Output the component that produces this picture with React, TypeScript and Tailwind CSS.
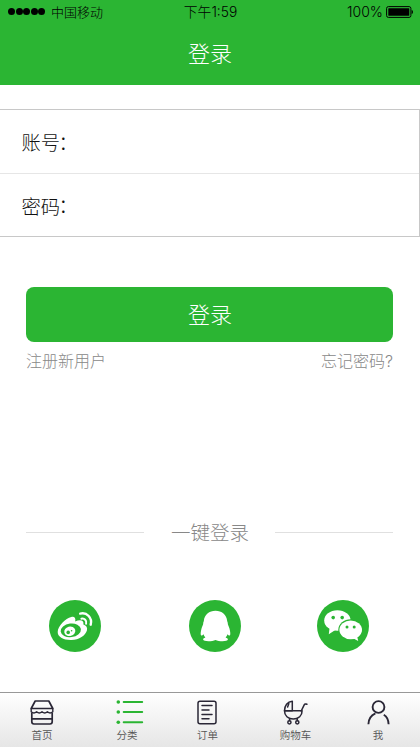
import React from "react";

const HomeIcon = () => (
  <svg width="24" height="25" viewBox="0 0 24 25" fill="none" stroke="#2a2736" strokeWidth="1.7" strokeLinejoin="round">
    <path d="M5.2 1h13.6l4 7.5H1.2z" />
    <path d="M1.2 8.5v3.2q2.7 2.4 5.4 0 2.7 2.4 5.4 0 2.7 2.4 5.4 0 2.7 2.4 5.4 0V8.5" strokeWidth="1.4" />
    <path d="M1.8 12.5v9.3q0 2.2 2.2 2.2h16q2.2 0 2.2-2.2v-9.3M2 18.8h20" />
  </svg>
);

const ListIcon = () => (
  <svg width="28" height="25" viewBox="0 0 28 25" fill="none" stroke="#2bb533" strokeWidth="2" strokeLinecap="round">
    <path d="M7.7 2h18.5M7.7 12h18.5M7.7 22.3h18.5" />
    <g fill="#2bb533" stroke="none">
      <circle cx="2.3" cy="2" r="1.8" />
      <circle cx="2.3" cy="12" r="1.8" />
      <circle cx="2.3" cy="22.3" r="1.8" />
    </g>
  </svg>
);

const OrderIcon = () => (
  <svg width="20" height="25" viewBox="0 0 20 25" fill="none" stroke="#2a2736" strokeWidth="1.5" strokeLinecap="round">
    <rect x="1" y="1.2" width="18" height="22.5" rx="2" />
    <path d="M5 5.6h10M5 10h7M5 14.4h10M5 18.8h7" />
  </svg>
);

const CartIcon = () => (
  <svg width="25" height="25" viewBox="0 0 25 25" fill="none" stroke="#2a2736" strokeWidth="1.5" strokeLinecap="round" strokeLinejoin="round">
    <path d="M9.3 1.2v9.6H1.5C1.5 5.8 4.4 1.7 9.3 1.2zM5.9 3.6L4.6 7" />
    <path d="M1.5 10.8h17.6c.1 4.8-3.6 8.2-8.8 8.2s-8.9-3.4-8.8-8.2z" />
    <path d="M18.2 11l3-6.2q.6-1.2 1.8-.8l.9.3M6.8 18.5l-.4 2M14 18.5l.4 2" />
    <circle cx="6.4" cy="22.3" r="1.6" />
    <circle cx="14.3" cy="22.3" r="1.6" />
  </svg>
);

const UserIcon = () => (
  <svg width="23" height="25" viewBox="0 0 23 25" fill="none" stroke="#2a2736" strokeWidth="1.9">
    <circle cx="11.5" cy="7" r="5.9" />
    <path d="M1.4 24.3c.1-4.9 2.6-8.9 7-10.9M16.8 14.8c3 1.8 4.7 5.2 4.8 9.5" />
  </svg>
);

const WeiboLogo = () => (
  <svg width="52" height="52" viewBox="0 0 52 52">
    <circle cx="26" cy="26" r="26" fill="#2bb533" />
    <path d="M22.3 17c3-.8 4.7 1 3.9 4.4 4.7-1.9 9-1.5 8.2 3 3 1 4.3 3.2 3.5 6-1.4 5-7.7 9.3-15.5 9.5-8 .2-13.9-3.2-13.7-8 .2-6 7.8-13.5 13.6-14.9z" fill="#fff" />
    <ellipse cx="21.8" cy="30.3" rx="10.2" ry="6.8" transform="rotate(-7 21.8 30.3)" fill="#2bb533" />
    <ellipse cx="20.8" cy="31.2" rx="5.6" ry="4.7" transform="rotate(-15 20.8 31.2)" fill="#fff" />
    <circle cx="19.2" cy="32.4" r="1.8" fill="#2bb533" />
    <circle cx="22.6" cy="30.8" r=".8" fill="#2bb533" />
    <path d="M31.2 13.6c6.7-1.8 12.4 4.6 10.5 11.1" fill="none" stroke="#fff" strokeWidth="2.4" strokeLinecap="round" />
    <path d="M32.4 18.7c3-.8 5.6 1.9 4.7 5" fill="none" stroke="#fff" strokeWidth="2" strokeLinecap="round" />
  </svg>
);

const QQLogo = () => (
  <svg width="52" height="52" viewBox="0 0 52 52">
    <circle cx="26" cy="26" r="26" fill="#2bb533" />
    <path d="M26.5 10.7c-6.3 0-11.2 4.1-11.6 9.9-.1 1.1-.7 1.8-.7 2.8 0 1.1-.9 2.4-1.6 4.8-.8 3-1.3 5.9-.6 7.1.6.8 1.6-.1 2.5-1 .3 1.3 1 2.4 1.9 3.3-1.4.5-2.4 1.1-2.3 2 .2 2.2 8.9 2.2 12.4.4 3.5 1.8 12.2 1.8 12.4-.4.1-.9-.9-1.5-2.3-2 .9-.9 1.6-2 1.9-3.3.9.9 1.9 1.8 2.5 1 .7-1.2.2-4.1-.6-7.1-.7-2.4-1.6-3.7-1.6-4.8 0-1-.6-1.7-.7-2.8-.4-5.8-5.3-9.9-11.6-9.9z" fill="#fff" />
  </svg>
);

const WechatLogo = () => (
  <svg width="52" height="52" viewBox="0 0 52 52">
    <circle cx="26" cy="26" r="26" fill="#2bb533" />
    <ellipse cx="20.4" cy="20.5" rx="13.2" ry="10.2" fill="#fff" />
    <path d="M12.6 27.5l-.8 6.8 6.5-4.2z" fill="#fff" />
    <ellipse cx="33.7" cy="29.8" rx="12.4" ry="10.6" fill="#2bb533" />
    <ellipse cx="33.7" cy="29.8" rx="11.3" ry="9.4" fill="#fff" />
    <path d="M36 38.2l5.2 2.7-1.1-5z" fill="#fff" />
    <g fill="#2bb533">
      <circle cx="16.2" cy="17.6" r="1.8" />
      <circle cx="25.2" cy="17.6" r="1.8" />
      <circle cx="30" cy="27" r="1.5" />
      <circle cx="37.2" cy="27" r="1.5" />
    </g>
  </svg>
);

const tabs = [
  { label: "首页", icon: <HomeIcon /> },
  { label: "分类", icon: <ListIcon />, shift: "ml-[5px]" },
  { label: "订单", icon: <OrderIcon />, shift: "-ml-px" },
  { label: "购物车", icon: <CartIcon />, shift: "-ml-px" },
  { label: "我", icon: <UserIcon /> },
];

const Field = ({ label }: { label: string }) => (
  <label className="flex h-[62.5px] items-center pl-[21.5px] pt-[2px] text-[19.3px] leading-7 text-[#111]">
    {label}
    <span className="-ml-[1.5px] -mt-px">：</span>
  </label>
);

export function App() {
  return (
    <div className="flex h-[747px] w-[420px] flex-col overflow-hidden bg-white font-['Noto_Sans_CJK_SC',sans-serif] font-light">
      <header className="h-[85px] shrink-0 bg-[#2bb533]">
        <div className="grid h-[23px] grid-cols-3 items-center pl-2 pr-[7px] text-[13px] leading-none text-black">
          <div className="flex items-center gap-[6px]">
            <div className="flex gap-[0.5px]">
              {[0, 1, 2, 3, 4].map((i) => (
                <span key={i} className="size-[7px] rounded-full bg-black" />
              ))}
            </div>
            <span className="-mt-px">中国移动</span>
          </div>
          <div className="pt-[2px] text-center font-['Inter','Noto_Sans_CJK_SC',sans-serif] text-[13.8px]">下午1:59</div>
          <div className="flex items-center justify-end gap-[3px] font-['Inter',sans-serif] text-[14px]">
            <span>100%</span>
            <svg width="27" height="12" viewBox="0 0 27 12">
              <rect x=".6" y=".6" width="24.3" height="10.8" rx="1.8" fill="none" stroke="#000" />
              <rect x="2.3" y="2.2" width="21" height="7.6" rx=".5" />
              <path d="M25.6 4q1.4 0 1.4 2t-1.4 2z" />
            </svg>
          </div>
        </div>
        <h1 className="flex h-[58px] items-center justify-center text-[22px] text-white">登录</h1>
      </header>

      <main className="flex flex-1 flex-col">
        <form className="mt-[24px] border-y border-r border-[#c8c8c8]">
          <Field label="账号" />
          <div className="h-px bg-[#e6e6e6]" />
          <Field label="密码" />
        </form>

        <div className="mt-[50px] pl-[26px] pr-[27px]">
          <button className="flex h-[55px] w-full items-center justify-center rounded-lg bg-[#2bb533] pb-[2px] pl-px text-[22px] text-white">登录</button>
          <div className="mt-[6px] flex justify-between text-[16px] leading-6 text-[#888]">
            <a>注册新用户</a>
            <a>忘记密码<span className="font-['Inter',sans-serif]">?</span></a>
          </div>
        </div>

        <div className="mt-[145px] flex items-center justify-between pl-[26px] pr-[27px]">
          <span className="h-px w-[118px] bg-[#e0e0e0]" />
          <span className="pl-px text-[19.5px] leading-7 text-[#888]">一键登录</span>
          <span className="h-px w-[118px] bg-[#e0e0e0]" />
        </div>

        <div className="mt-[54px] flex pl-[49px]">
          <WeiboLogo />
          <div className="ml-[88px] mr-[76px]">
            <QQLogo />
          </div>
          <WechatLogo />
        </div>
      </main>

      <nav className="grid h-[55px] shrink-0 grid-cols-[84px_86px_75px_101px_64px] border-t border-[#999] bg-linear-to-b from-white to-[#e6e6e6]">
        {tabs.map((tab) => (
          <a key={tab.label} className="flex flex-col items-center pt-[7px] text-[10.5px] leading-4 font-[350] text-[#555]">
            <span className={tab.shift}>{tab.icon}</span>
            <span className="mt-[2px]">{tab.label}</span>
          </a>
        ))}
      </nav>
    </div>
  );
}

export default App;
